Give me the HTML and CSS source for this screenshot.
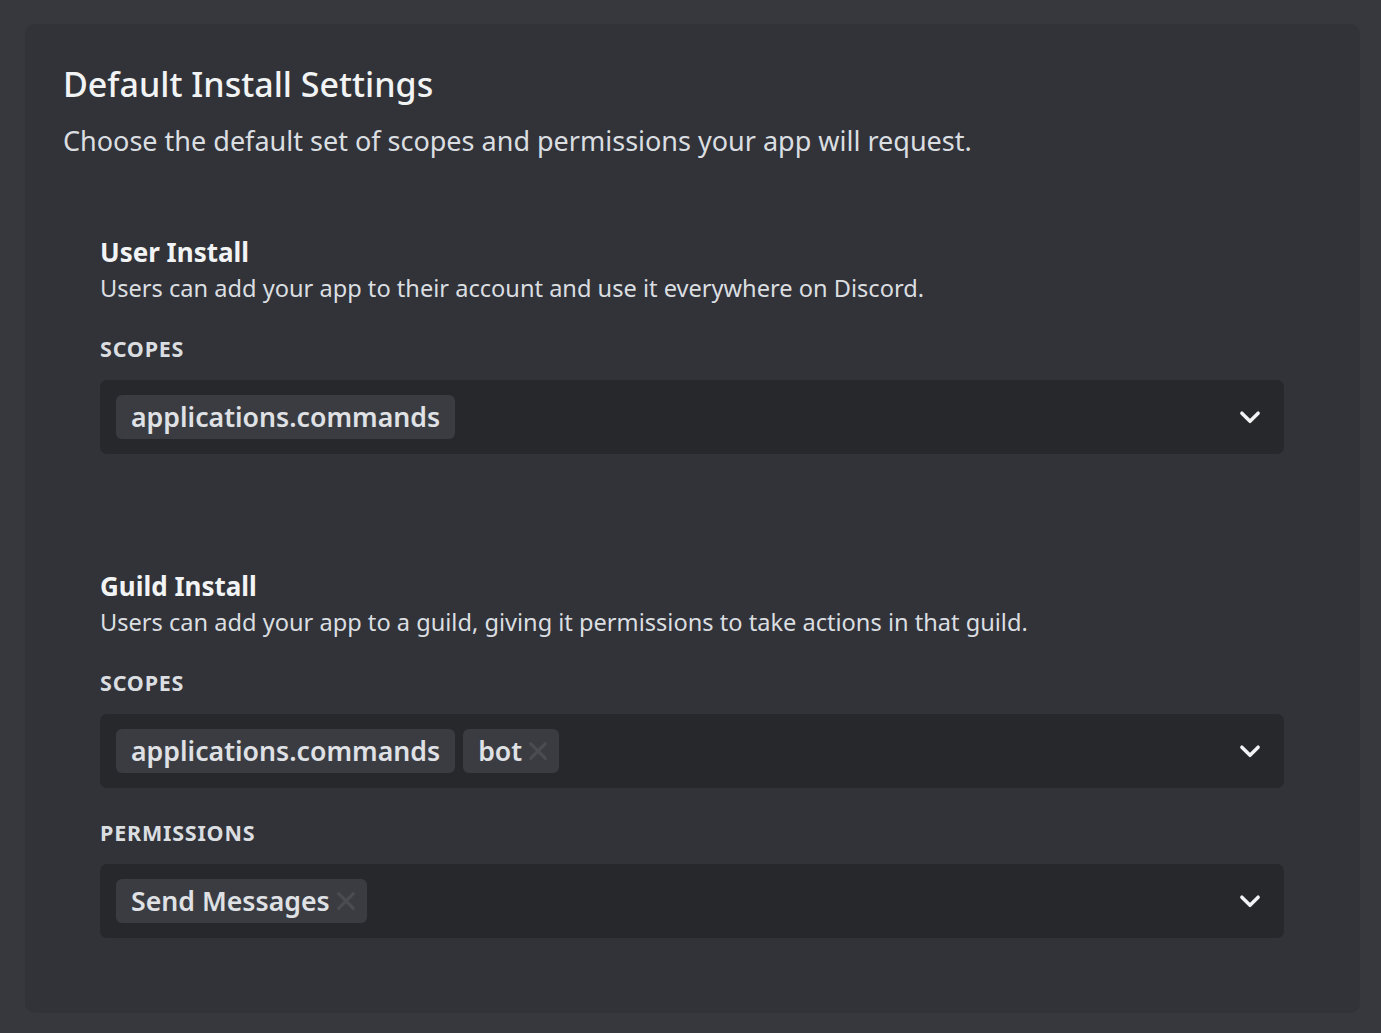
FILE: index.html
```html
<!DOCTYPE html>
<html>
<head>
<meta charset="utf-8">
<link rel="stylesheet" href="styles.css">
</head>
<body>
<div class="page">
  <section class="card">
    <h1 class="title">Default Install Settings</h1>
    <p class="subtitle">Choose the default set of scopes and permissions your app will request.</p>

    <div class="group">
      <h2 class="group-title">User Install</h2>
      <p class="group-desc">Users can add your app to their account and use it everywhere on Discord.</p>
      <div class="label">SCOPES</div>
      <div class="select">
        <div class="chips">
          <span class="chip">applications.commands</span>
        </div>
        <svg class="chevron" viewBox="0 0 24 24" width="26" height="26"><path d="M4.5 8.5L12 16l7.5-7.5" fill="none" stroke="currentColor" stroke-width="3.2" stroke-linecap="round" stroke-linejoin="round"/></svg>
      </div>
    </div>

    <div class="group guild">
      <h2 class="group-title">Guild Install</h2>
      <p class="group-desc">Users can add your app to a guild, giving it permissions to take actions in that guild.</p>
      <div class="label">SCOPES</div>
      <div class="select">
        <div class="chips">
          <span class="chip">applications.commands</span>
          <span class="chip">bot<svg class="x" viewBox="0 0 24 24" width="22" height="22"><path d="M4 4l16 16M20 4L4 20" stroke="currentColor" stroke-width="3.4" stroke-linecap="round"/></svg></span>
        </div>
        <svg class="chevron" viewBox="0 0 24 24" width="26" height="26"><path d="M4.5 8.5L12 16l7.5-7.5" fill="none" stroke="currentColor" stroke-width="3.2" stroke-linecap="round" stroke-linejoin="round"/></svg>
      </div>
      <div class="label perm">PERMISSIONS</div>
      <div class="select">
        <div class="chips">
          <span class="chip">Send Messages<svg class="x" viewBox="0 0 24 24" width="22" height="22"><path d="M4 4l16 16M20 4L4 20" stroke="currentColor" stroke-width="3.4" stroke-linecap="round"/></svg></span>
        </div>
        <svg class="chevron" viewBox="0 0 24 24" width="26" height="26"><path d="M4.5 8.5L12 16l7.5-7.5" fill="none" stroke="currentColor" stroke-width="3.2" stroke-linecap="round" stroke-linejoin="round"/></svg>
      </div>
    </div>
  </section>
</div>
</body>
</html>
```
FILE: styles.css
```css
* { box-sizing: border-box; }
html, body {
  margin: 0;
  padding: 0;
  background: #37383d;
  height: 100%;
}
body {
  font-family: "Noto Sans", "Open Sans", sans-serif;
  color: #f2f3f5;
}
.page {
  padding: 24px 21px 20px 25px;
}
.card {
  background: #313338;
  border-radius: 10px;
  padding: 38px 76px 74px 38px;
  min-height: 989px;
}
.title {
  margin: 0;
  font-size: 34px;
  font-weight: 500;
  line-height: 44px;
  color: #f2f3f5;
}
.subtitle {
  margin: 18px 0 0;
  font-size: 27px;
  line-height: 34px;
  color: #dbdee1;
}
.group {
  margin: 77px 0 0 37px;
}
.guild {
  margin-top: 115px;
}
.group-title {
  margin: 0;
  font-size: 26px;
  font-weight: 700;
  line-height: 34px;
  color: #f2f3f5;
}
.group-desc {
  margin: 3px 0 0;
  font-size: 23.6px;
  line-height: 32px;
  color: #dbdee1;
}
.label {
  margin-top: 32px;
  font-size: 21.5px;
  font-weight: 700;
  letter-spacing: 0.8px;
  line-height: 26px;
  color: #dbdee1;
}
.label.perm { margin-top: 32px; }
.select {
  margin-top: 18px;
  height: 74px;
  background: #27282c;
  border-radius: 7px;
  display: flex;
  align-items: center;
  justify-content: space-between;
  padding: 0 21px 0 16px;
}
.chips {
  display: flex;
  gap: 8px;
}
.chip {
  display: inline-flex;
  align-items: center;
  height: 44px;
  padding: 0 15px;
  background: #3b3c42;
  border-radius: 6px;
  font-size: 26.7px;
  font-weight: 600;
  color: #dfe1e5;
  line-height: 44px;
}
.chip .x {
  color: #4a4c52;
  margin-left: 5px;
  margin-right: -5px;
}
.chevron {
  color: #f2f3f5;
}
```
